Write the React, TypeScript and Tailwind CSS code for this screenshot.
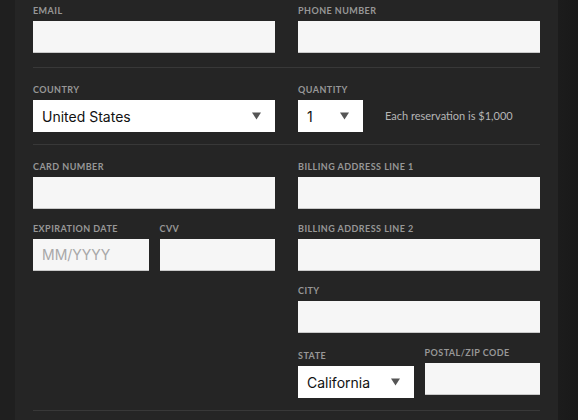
import React from 'react';

const labelCls =
  "block h-[11px] mb-[5px] pt-px text-[9px] leading-[10px] font-bold tracking-[0.05em] uppercase text-[#979797] [font-family:Lato,'Open_Sans',sans-serif]";

const inputCls =
  "block w-full h-[32px] bg-[#f6f6f6] border-b border-[#c9c9c9] px-[9px] text-[14px] text-[#222] outline-none placeholder:text-[#a8a8a8] [font-family:Inter,'Liberation_Sans',sans-serif]";

const Caret: React.FC = () => (
  <svg width="9" height="8" viewBox="0 0 9 8" className="shrink-0">
    <path d="M0 0.5 H9 L4.5 7.5 Z" fill="#555" />
  </svg>
);

interface FieldProps {
  label: string;
  placeholder?: string;
  className?: string;
}

const Field: React.FC<FieldProps> = ({ label, placeholder, className = '' }) => (
  <div className={className}>
    <label className={labelCls}>{label}</label>
    <input className={inputCls} placeholder={placeholder} />
  </div>
);

interface SelectProps {
  label: string;
  value: string;
  width: string;
  className?: string;
}

const SelectBox: React.FC<{ value: string; width: string }> = ({ value, width }) => (
  <div
    className={`${width} h-[32px] bg-white flex items-center justify-between pl-[9px] pr-[14px] text-[14px] text-[#111] [font-family:Inter,'Liberation_Sans',sans-serif]`}
  >
    <span>{value}</span>
    <Caret />
  </div>
);

const SelectField: React.FC<SelectProps> = ({ label, value, width, className = '' }) => (
  <div className={className}>
    <label className={labelCls}>{label}</label>
    <SelectBox value={value} width={width} />
  </div>
);

const Divider: React.FC = () => <div className="h-px bg-[#383838]" />;

export default function App() {
  return (
    <div className="w-[578px] h-[420px] overflow-hidden flex bg-[#1e1e1e]">
      <div className="w-[15px] shrink-0 bg-[#1f1f1f]" />
      <div className="w-[543px] shrink-0 bg-[#252525] px-[18px] pt-[5px]">
        <div className="grid grid-cols-2 gap-x-[23px]">
          <Field label="Email" />
          <Field label="Phone Number" />
        </div>
        <div className="mt-[14px] mb-[16px]">
          <Divider />
        </div>
        <div className="grid grid-cols-2 gap-x-[23px]">
          <SelectField label="Country" value="United States" width="w-full" />
          <div>
            <label className={labelCls}>Quantity</label>
            <div className="flex items-center gap-[22px]">
              <SelectBox value="1" width="w-[65px]" />
              <span className="text-[11px] text-[#b5b5b5] [font-family:Lato,'Open_Sans',sans-serif]">
                Each reservation is $1,000
              </span>
            </div>
          </div>
        </div>
        <div className="mt-[12px] mb-[16px]">
          <Divider />
        </div>
        <div className="grid grid-cols-2 gap-x-[23px]">
          <div className="flex flex-col gap-[14px]">
            <Field label="Card Number" />
            <div className="grid grid-cols-2 gap-x-[11px]">
              <Field label="Expiration Date" placeholder="MM/YYYY" />
              <Field label="CVV" />
            </div>
          </div>
          <div className="flex flex-col gap-[14px]">
            <Field label="Billing Address Line 1" />
            <Field label="Billing Address Line 2" />
            <Field label="City" />
            <div className="grid grid-cols-2 gap-x-[11px]">
              <SelectField label="State" value="California" width="w-full" className="pt-[3px]" />
              <Field label="Postal/Zip Code" />
            </div>
          </div>
        </div>
        <div className="mt-[12px]">
          <Divider />
        </div>
      </div>
      <div className="flex-1 bg-gradient-to-r from-[#1c1c1c] to-[#191919]" />
    </div>
  );
}
